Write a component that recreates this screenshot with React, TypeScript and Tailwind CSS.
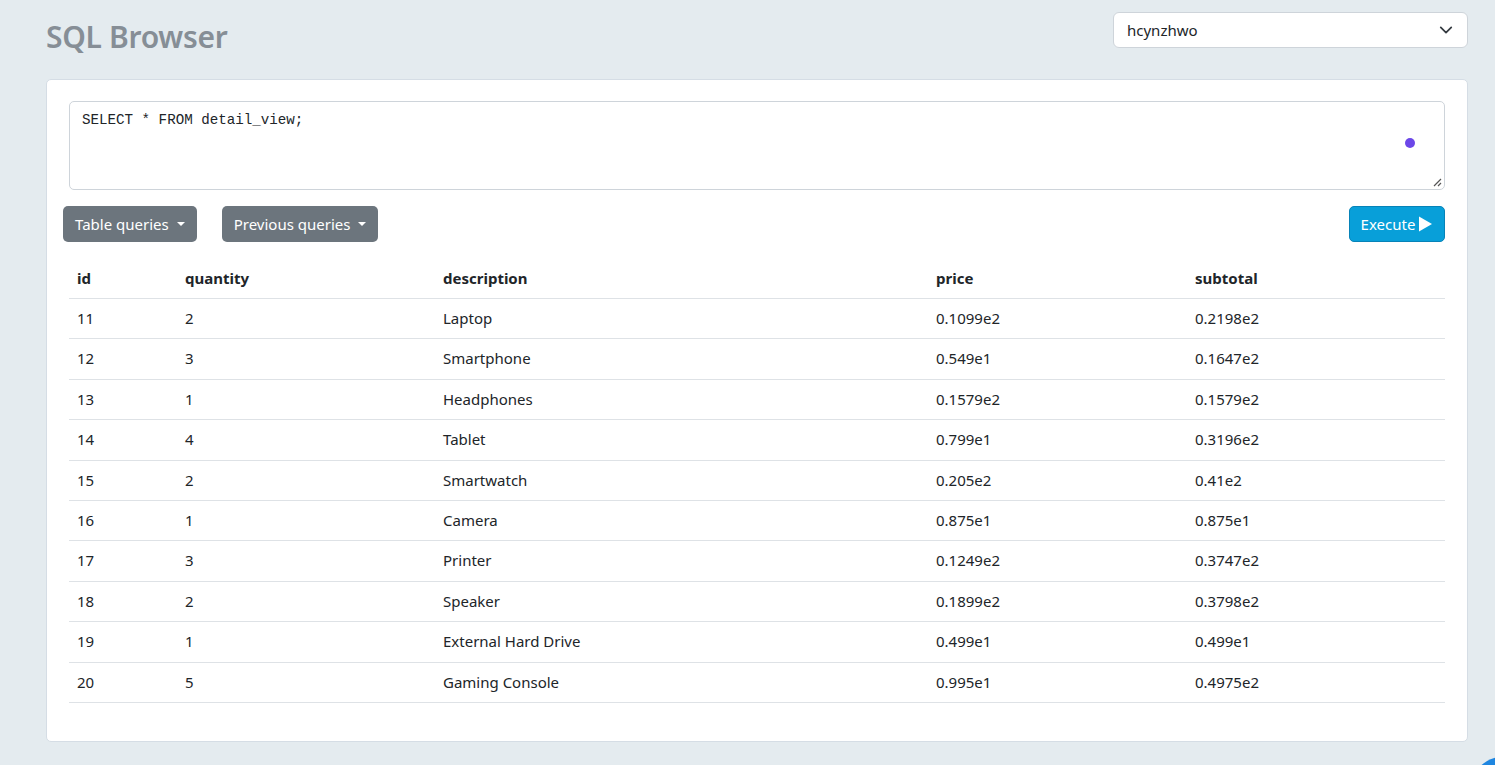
import React from "react";

const rows = [
  ["11", "2", "Laptop", "0.1099e2", "0.2198e2"],
  ["12", "3", "Smartphone", "0.549e1", "0.1647e2"],
  ["13", "1", "Headphones", "0.1579e2", "0.1579e2"],
  ["14", "4", "Tablet", "0.799e1", "0.3196e2"],
  ["15", "2", "Smartwatch", "0.205e2", "0.41e2"],
  ["16", "1", "Camera", "0.875e1", "0.875e1"],
  ["17", "3", "Printer", "0.1249e2", "0.3747e2"],
  ["18", "2", "Speaker", "0.1899e2", "0.3798e2"],
  ["19", "1", "External Hard Drive", "0.499e1", "0.499e1"],
  ["20", "5", "Gaming Console", "0.995e1", "0.4975e2"],
];

const headers = ["id", "quantity", "description", "price", "subtotal"];
const widths = ["w-[108px]", "w-[258px]", "w-[493px]", "w-[259px]", "w-[258px]"];

function Caret() {
  return <span className="ml-[8px] inline-block w-0 h-0 border-l-[4px] border-r-[4px] border-t-[4px] border-l-transparent border-r-transparent border-t-white align-middle" />;
}

export default function App() {
  return (
    <div
      className="min-h-[765px] w-full bg-[#e4ebef] text-[#212529] relative overflow-hidden"
      style={{ fontFamily: '"Noto Sans", "Open Sans", sans-serif' }}
    >
      <div className="pl-[46px] pr-[27px] pt-[12px]">
        <div className="flex items-start justify-between">
          <h1 className="text-[30px] font-semibold text-[#868e96] leading-[36px] mt-[7px] tracking-[-0.3px]">SQL Browser</h1>
          <div className="w-[355px] h-[36px] bg-white border border-[#ced4da] rounded-[6px] flex items-center justify-between pl-[13px] pr-[14px] text-[15px]">
            <span>hcynzhwo</span>
            <svg width="14" height="14" viewBox="0 0 16 16" fill="none" stroke="#343a40" strokeWidth="2" strokeLinecap="round" strokeLinejoin="round">
              <path d="M2 5l6 6 6-6" />
            </svg>
          </div>
        </div>

        <div className="mt-[24px] bg-white border border-[#d5dde5] rounded-[5px] pt-[21px] pb-[38px]">
          <div className="px-[22px]">
            <div className="relative h-[89px] border border-[#ced4da] rounded-[5px] px-[12px] pt-[8px]">
              <div className="text-[14.2px] leading-[21px]" style={{ fontFamily: '"Liberation Mono", "DejaVu Sans Mono", monospace' }}>
                SELECT * FROM detail_view;
              </div>
              <div className="absolute right-[29px] top-[36px] w-[10px] h-[10px] rounded-full bg-[#6c47e8]" />
              <svg className="absolute right-[2px] bottom-[2px]" width="10" height="10" viewBox="0 0 10 10" stroke="#555" strokeWidth="1.2">
                <path d="M9 2L2 9M9 6L6 9" />
              </svg>
            </div>
          </div>

          <div className="flex items-center justify-between pl-[16px] pr-[22px] mt-[16px]">
            <div className="flex gap-[25px]">
              <button className="h-[36px] px-[12px] bg-[#6c757d] text-white rounded-[5px] text-[15px] flex items-center">
                Table queries<Caret />
              </button>
              <button className="h-[36px] px-[12px] bg-[#6c757d] text-white rounded-[5px] text-[15px] flex items-center">
                Previous queries<Caret />
              </button>
            </div>
            <button className="h-[36px] w-[96px] bg-[#089fd9] border border-[#0783b8] text-white rounded-[5px] text-[15px] flex items-center justify-center gap-[2px]">
              Execute
              <svg width="16" height="18" viewBox="0 0 16 18"><path d="M2 1.5 L15 9 L2 16.5 Z" fill="white" /></svg>
            </button>
          </div>

          <div className="px-[22px] mt-[17px]">
            <table className="w-full border-collapse text-[15px]">
              <thead>
                <tr className="border-b border-[#dee2e6]">
                  {headers.map((h, i) => (
                    <th key={h} className={`${widths[i]} text-left font-bold px-[8px] py-[8px] leading-[23px]`}>{h}</th>
                  ))}
                </tr>
              </thead>
              <tbody>
                {rows.map((r) => (
                  <tr key={r[0]} className="border-b border-[#dee2e6]">
                    {r.map((c, i) => (
                      <td key={i} className="px-[8px] py-[8px] leading-[23.4px]">{c}</td>
                    ))}
                  </tr>
                ))}
              </tbody>
            </table>
          </div>
        </div>
      </div>
      <div className="absolute left-[1472px] top-[757px] w-[60px] h-[60px] rounded-full bg-[#1f86e0]" />
    </div>
  );
}
